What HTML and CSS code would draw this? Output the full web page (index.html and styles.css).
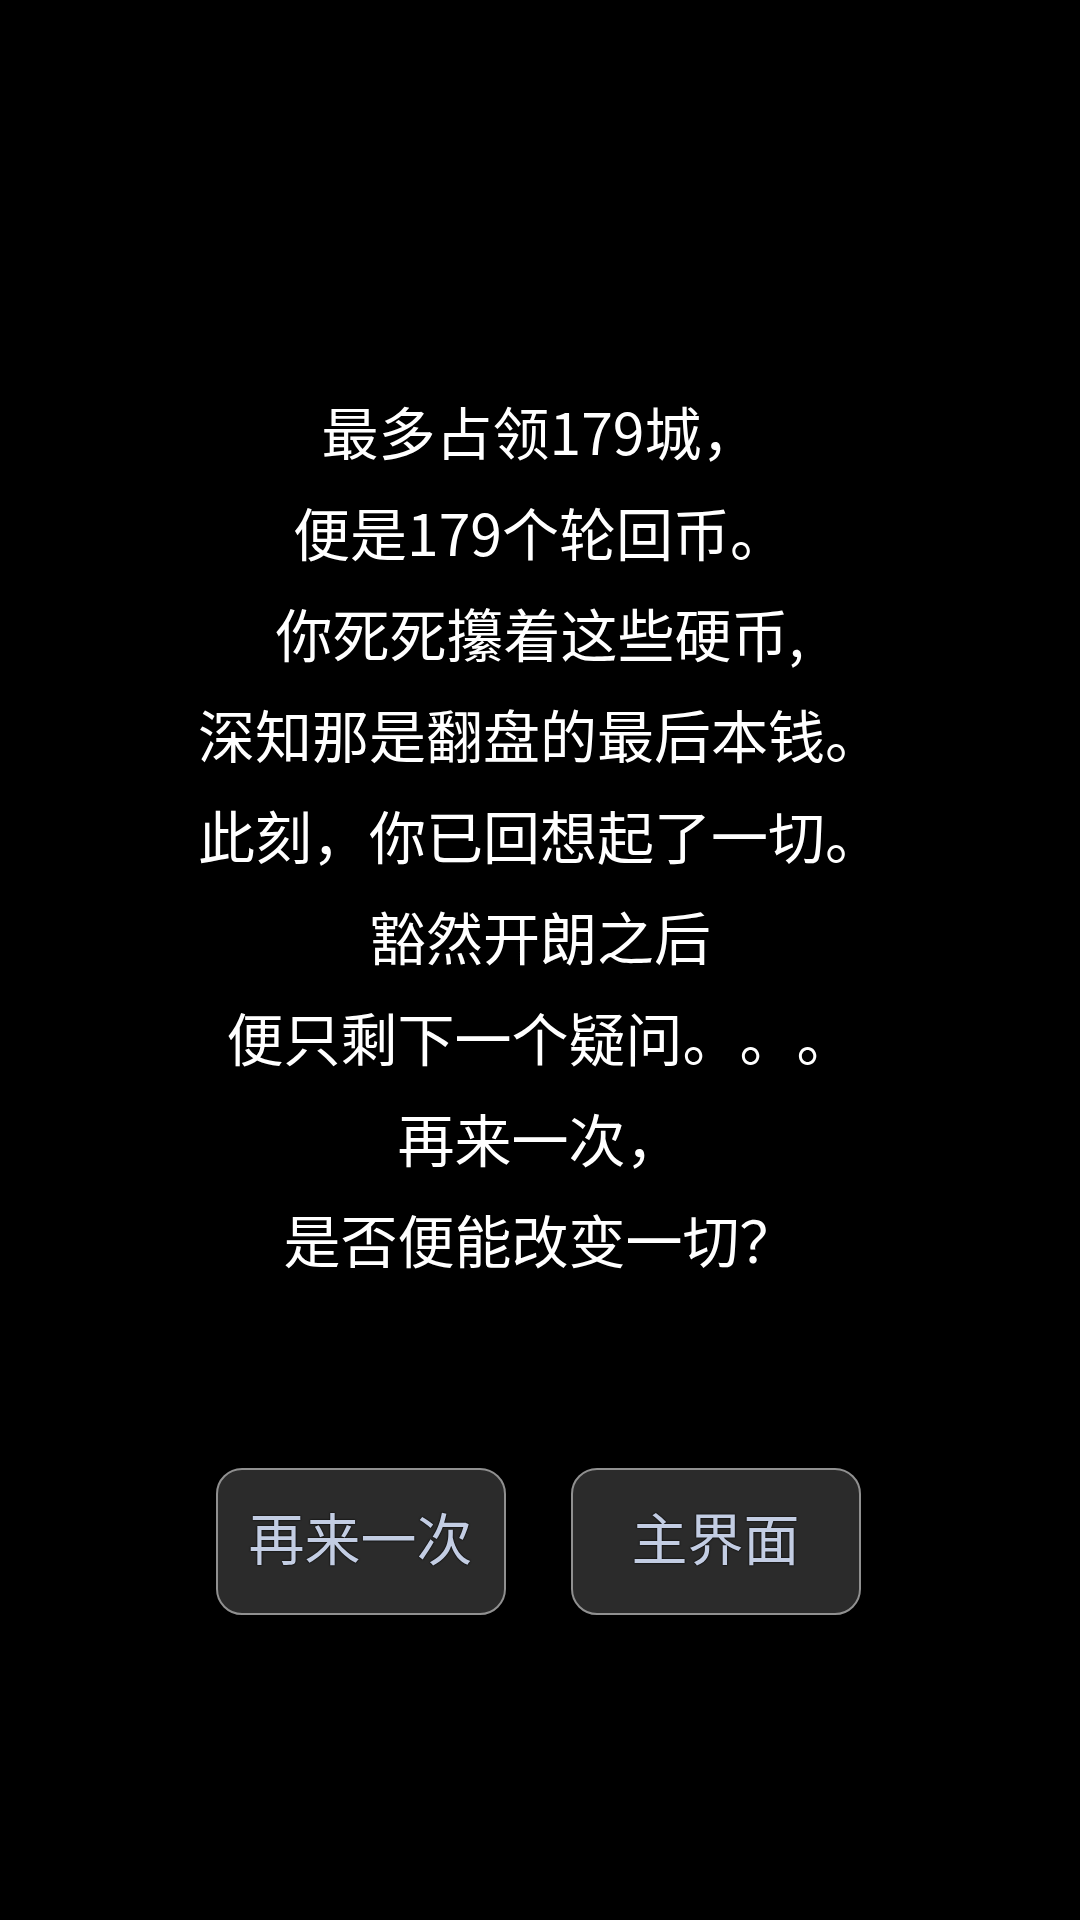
FILE: index.html
```html
<!DOCTYPE html>
<html lang="zh-CN">
<head>
<meta charset="utf-8">
<title>结局</title>
<link rel="stylesheet" href="styles.css">
</head>
<body>
<main class="screen">
  <section class="story">
    <p class="line">最多占领179城，</p>
    <p class="line">便是179个轮回币。</p>
    <p class="line">你死死攥着这些硬币,</p>
    <p class="line">深知那是翻盘的最后本钱。</p>
    <p class="line">此刻，你已回想起了一切。</p>
    <p class="line">豁然开朗之后</p>
    <p class="line">便只剩下一个疑问。。。</p>
    <p class="line">再来一次，</p>
    <p class="line">是否便能改变一切？</p>
  </section>
  <div class="actions">
    <button class="btn">再来一次</button>
    <button class="btn">主界面</button>
  </div>
</main>
</body>
</html>
```

FILE: styles.css
```css
html, body {
  margin: 0;
  padding: 0;
  background: #000;
}
body {
  width: 1080px;
  height: 1920px;
  overflow: hidden;
  font-family: "Noto Sans CJK SC", "Noto Sans", sans-serif;
}
.screen {
  display: flex;
  flex-direction: column;
  align-items: center;
  padding-top: 380px;
}
.story {
  display: flex;
  flex-direction: column;
  align-items: center;
  width: 100%;
}
.line {
  margin: 0;
  color: #fff;
  font-size: 57px;
  line-height: 101px;
  height: 101px;
  white-space: pre;
  text-align: center;
  text-spacing-trim: space-all;
}
.actions {
  display: flex;
  gap: 65px;
  margin-top: 179px;
  margin-left: -4px;
}
.btn {
  width: 290px;
  height: 147px;
  box-sizing: border-box;
  background: #2b2b2b;
  border: 2.5px solid #909090;
  border-radius: 26px;
  color: #c3cde3;
  font-family: "Noto Sans CJK SC", "Noto Sans", sans-serif;
  font-size: 56px;
  line-height: 1;
  padding: 0 0 12px;
  text-shadow: 0 0 2px #000, 0 0 1px #000;
  cursor: pointer;
}
```
